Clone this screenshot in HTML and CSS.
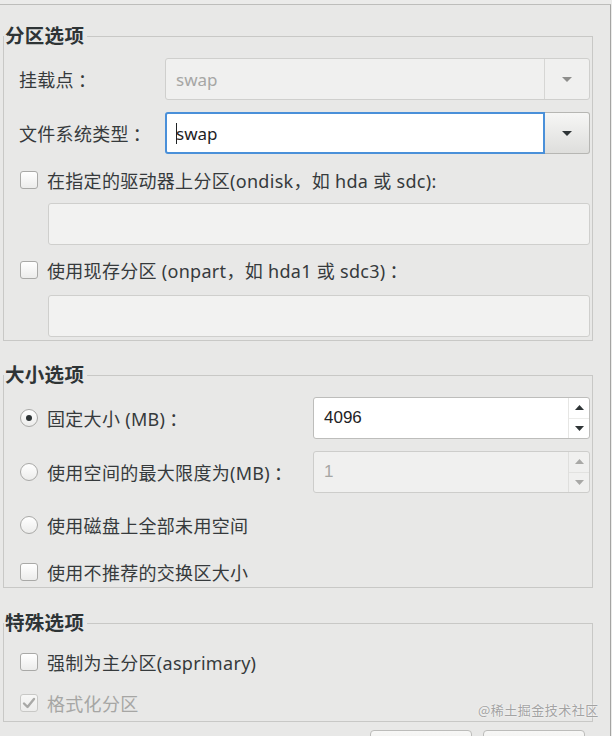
FILE: index.html
```html
<!DOCTYPE html>
<html lang="zh-CN">
<head>
<meta charset="utf-8">
<title>分区选项</title>
<link rel="stylesheet" href="styles.css">
</head>
<body>
<div class="window">
  <fieldset class="frame frame-part">
    <legend>分区选项</legend>
    <div class="field-row r1">
      <span class="label">挂载点<span class="colon">：</span></span>
      <div class="combo disabled">
        <span class="combo-text">swap</span>
        <span class="combo-btn"><svg width="10" height="5" viewBox="0 0 10 5"><polygon points="0,0 10,0 5,5"/></svg></span>
      </div>
    </div>
    <div class="field-row r2">
      <span class="label">文件系统类型<span class="colon">：</span></span>
      <div class="combo active">
        <span class="combo-text"><span class="caret"></span>swap</span>
        <span class="combo-btn"><svg width="10" height="5" viewBox="0 0 10 5"><polygon points="0,0 10,0 5,5"/></svg></span>
      </div>
    </div>
    <div class="check-row r3"><span class="check"></span><span>在指定的驱动器上分区(ondisk，如 hda 或 sdc):</span></div>
    <div class="entry disabled r4"></div>
    <div class="check-row r5"><span class="check"></span><span>使用现存分区 (onpart，如 hda1 或 sdc3)<span class="colon">：</span></span></div>
    <div class="entry disabled r6"></div>
  </fieldset>

  <fieldset class="frame frame-size">
    <legend>大小选项</legend>
    <div class="spin-row s1">
      <span class="radio checked"></span><span class="label">固定大小 (MB)<span class="colon">：</span></span>
      <div class="spin">
        <span class="spin-text">4096</span>
        <span class="spin-btns">
          <span class="sb"><svg width="9" height="5" viewBox="0 0 9 5"><polygon points="0,5 9,5 4.5,0"/></svg></span>
          <span class="sb"><svg width="9" height="5" viewBox="0 0 9 5"><polygon points="0,0 9,0 4.5,5"/></svg></span>
        </span>
      </div>
    </div>
    <div class="spin-row s2">
      <span class="radio"></span><span class="label">使用空间的最大限度为(MB)<span class="colon">：</span></span>
      <div class="spin disabled">
        <span class="spin-text">1</span>
        <span class="spin-btns">
          <span class="sb"><svg width="9" height="5" viewBox="0 0 9 5"><polygon points="0,5 9,5 4.5,0"/></svg></span>
          <span class="sb"><svg width="9" height="5" viewBox="0 0 9 5"><polygon points="0,0 9,0 4.5,5"/></svg></span>
        </span>
      </div>
    </div>
    <div class="check-row s3"><span class="radio"></span><span>使用磁盘上全部未用空间</span></div>
    <div class="check-row s4"><span class="check"></span><span>使用不推荐的交换区大小</span></div>
  </fieldset>

  <fieldset class="frame frame-special">
    <legend>特殊选项</legend>
    <div class="check-row t1"><span class="check"></span><span>强制为主分区(asprimary)</span></div>
    <div class="check-row t2 dim"><span class="check checked-dis"><svg width="14" height="12" viewBox="0 0 14 12"><path d="M2 6.5 L5.5 10 L12 2" fill="none" stroke="#a9a9a7" stroke-width="2.4" stroke-linecap="round" stroke-linejoin="round"/></svg></span><span>格式化分区</span></div>
  </fieldset>

  <div class="footer">
    <span class="btn"></span>
    <span class="btn"></span>
  </div>
</div>
<div class="watermark">@稀土掘金技术社区</div>
</body>
</html>
```

FILE: styles.css
```css
html, body {
  margin: 0;
  padding: 0;
}
body {
  width: 612px;
  height: 736px;
  overflow: hidden;
  background: #ebebea;
  font-family: "Noto Sans", "Noto Sans CJK SC", sans-serif;
  font-size: 18px;
  letter-spacing: 0.3px;
  color: #363a3c;
  position: relative;
}
.window {
  margin-top: 4px;
  width: 611px;
  height: 740px;
  box-sizing: border-box;
  border-top: 1px solid #bdbdbb;
  border-right: 1px solid #a4a4a2;
  background: #e8e8e7;
}
.frame {
  margin: 0 0 0 3px;
  width: 590px;
  box-sizing: border-box;
  border: 1px solid #c8c8c6;
  padding: 0;
  min-inline-size: auto;
}
.frame legend {
  padding: 0 3px 0 1px;
  font-weight: 700;
  font-size: 19.5px;
  letter-spacing: 0.3px;
  line-height: 22px;
  color: #2e3436;
}
.frame-part { margin-top: 20px; padding-bottom: 3px; }
.frame-size { margin-top: 23px; padding-bottom: 2px; }
.frame-special { margin-top: 24px; padding-bottom: 5px; }

.colon {
  font-family: "Noto Sans CJK TC", sans-serif;
  margin-left: 4px;
}

.field-row {
  display: flex;
  align-items: center;
  height: 42px;
  padding: 0 2px 0 15px;
}
.r1 { margin-top: 11px; }
.r2 { margin-top: 12px; }
.r3 { margin-top: 13px; }
.r4 { margin-top: 10px; }
.r5 { margin-top: 12px; }
.r6 { margin-top: 12px; }

.label { white-space: nowrap; }

.combo {
  margin-left: auto;
  width: 425px;
  height: 42px;
  display: flex;
  box-sizing: border-box;
  font-size: 17px;
  letter-spacing: 0;
}
.combo-text {
  flex: 1;
  display: flex;
  align-items: center;
  padding-left: 11px;
  box-sizing: border-box;
}
.combo-btn {
  width: 45px;
  display: flex;
  align-items: center;
  justify-content: center;
  box-sizing: border-box;
}
.combo.disabled {
  border: 1px solid #cfcfcd;
  border-radius: 3px;
  background: #f0f0ef;
}
.combo.disabled .combo-text { color: #a6a6a4; padding-left: 10px; }
.combo.disabled .combo-btn { border-left: 1px solid #d6d6d4; }
.combo.disabled svg { fill: #8e8e8c; }

.combo.active .combo-text {
  background: #ffffff;
  border: 2px solid #4a90d9;
  border-radius: 3px 0 0 3px;
  padding-left: 9px;
  color: #1e2224;
}
.combo.active .combo-btn {
  background: linear-gradient(#f6f6f5, #dededc);
  border: 1px solid #b6b6b3;
  border-left: none;
  border-radius: 0 3px 3px 0;
}
.combo.active svg { fill: #2e3436; }
.caret {
  display: inline-block;
  width: 1px;
  height: 21px;
  background: #1e2224;
  margin-right: -1px;
}

.check-row {
  display: flex;
  align-items: center;
  height: 26px;
  padding-left: 16px;
  gap: 9px;
  white-space: nowrap;
}
.check {
  width: 18px;
  height: 18px;
  box-sizing: border-box;
  border: 1px solid #a9a9a7;
  border-radius: 3px;
  background: linear-gradient(#ffffff, #ececeb);
  flex: none;
  display: flex;
  align-items: center;
  justify-content: center;
}
.check.checked-dis {
  border-color: #c8c8c6;
  background: linear-gradient(#f7f7f6, #ededec);
}
.dim { color: #a6a6a4; }

.entry {
  height: 42px;
  margin-left: 44px;
  margin-right: 2px;
  box-sizing: border-box;
  border-radius: 3px;
}
.entry.disabled {
  background: #f2f2f1;
  border: 1px solid #cfcfcd;
}

.spin-row {
  display: flex;
  align-items: center;
  height: 42px;
  padding: 0 2px 0 16px;
}
.spin-row .radio { margin-right: 9px; }
.s1 { margin-top: 11px; }
.s2 { margin-top: 12px; }
.s3 { margin-top: 19px; }
.s4 { margin-top: 21px; }
.t1 { margin-top: 15px; }
.t2 { margin-top: 15px; }

.radio {
  width: 18px;
  height: 18px;
  box-sizing: border-box;
  border: 1px solid #a9a9a7;
  border-radius: 50%;
  background: linear-gradient(#ffffff, #ececeb);
  flex: none;
  display: flex;
  align-items: center;
  justify-content: center;
}
.radio.checked::after {
  content: "";
  width: 6px;
  height: 6px;
  border-radius: 50%;
  background: #2e3436;
}

.spin {
  margin-left: auto;
  width: 277px;
  height: 42px;
  box-sizing: border-box;
  border: 1px solid #bdbdbb;
  border-radius: 3px;
  background: #ffffff;
  display: flex;
}
.spin-text {
  flex: 1;
  display: flex;
  align-items: center;
  padding-left: 10px;
  font-family: "Liberation Sans", "Noto Sans", sans-serif;
  font-size: 17px;
  letter-spacing: 0;
  color: #1e2224;
}
.spin-btns {
  width: 20px;
  display: flex;
  flex-direction: column;
  border-left: 1px solid #e6e6e4;
}
.sb {
  flex: 1;
  display: flex;
  align-items: center;
  justify-content: center;
}
.sb + .sb { border-top: 1px solid #ececea; }
.spin svg { fill: #2e3436; }
.spin.disabled {
  background: #f0f0ef;
  border-color: #cdcdcb;
}
.spin.disabled .spin-text { color: #a6a6a4; }
.spin.disabled svg { fill: #a8a8a6; }
.spin.disabled .spin-btns { border-left-color: #dfdfdd; }
.spin.disabled .sb + .sb { border-top-color: #e2e2e0; }

.footer {
  display: flex;
  justify-content: flex-end;
  gap: 11px;
  padding-right: 25px;
  margin-top: 8px;
}
.btn {
  width: 102px;
  height: 36px;
  box-sizing: border-box;
  border: 1px solid #bcbcba;
  border-radius: 4px;
  background: linear-gradient(#f7f7f6, #e4e4e2);
}

.watermark {
  position: absolute;
  left: 478px;
  top: 700px;
  font-family: "Noto Sans CJK SC", sans-serif;
  font-size: 13px;
  letter-spacing: 0.5px;
  line-height: 20px;
  color: #a3a3a3;
  text-shadow: 0 0 2px #ffffff;
  white-space: nowrap;
}
```
